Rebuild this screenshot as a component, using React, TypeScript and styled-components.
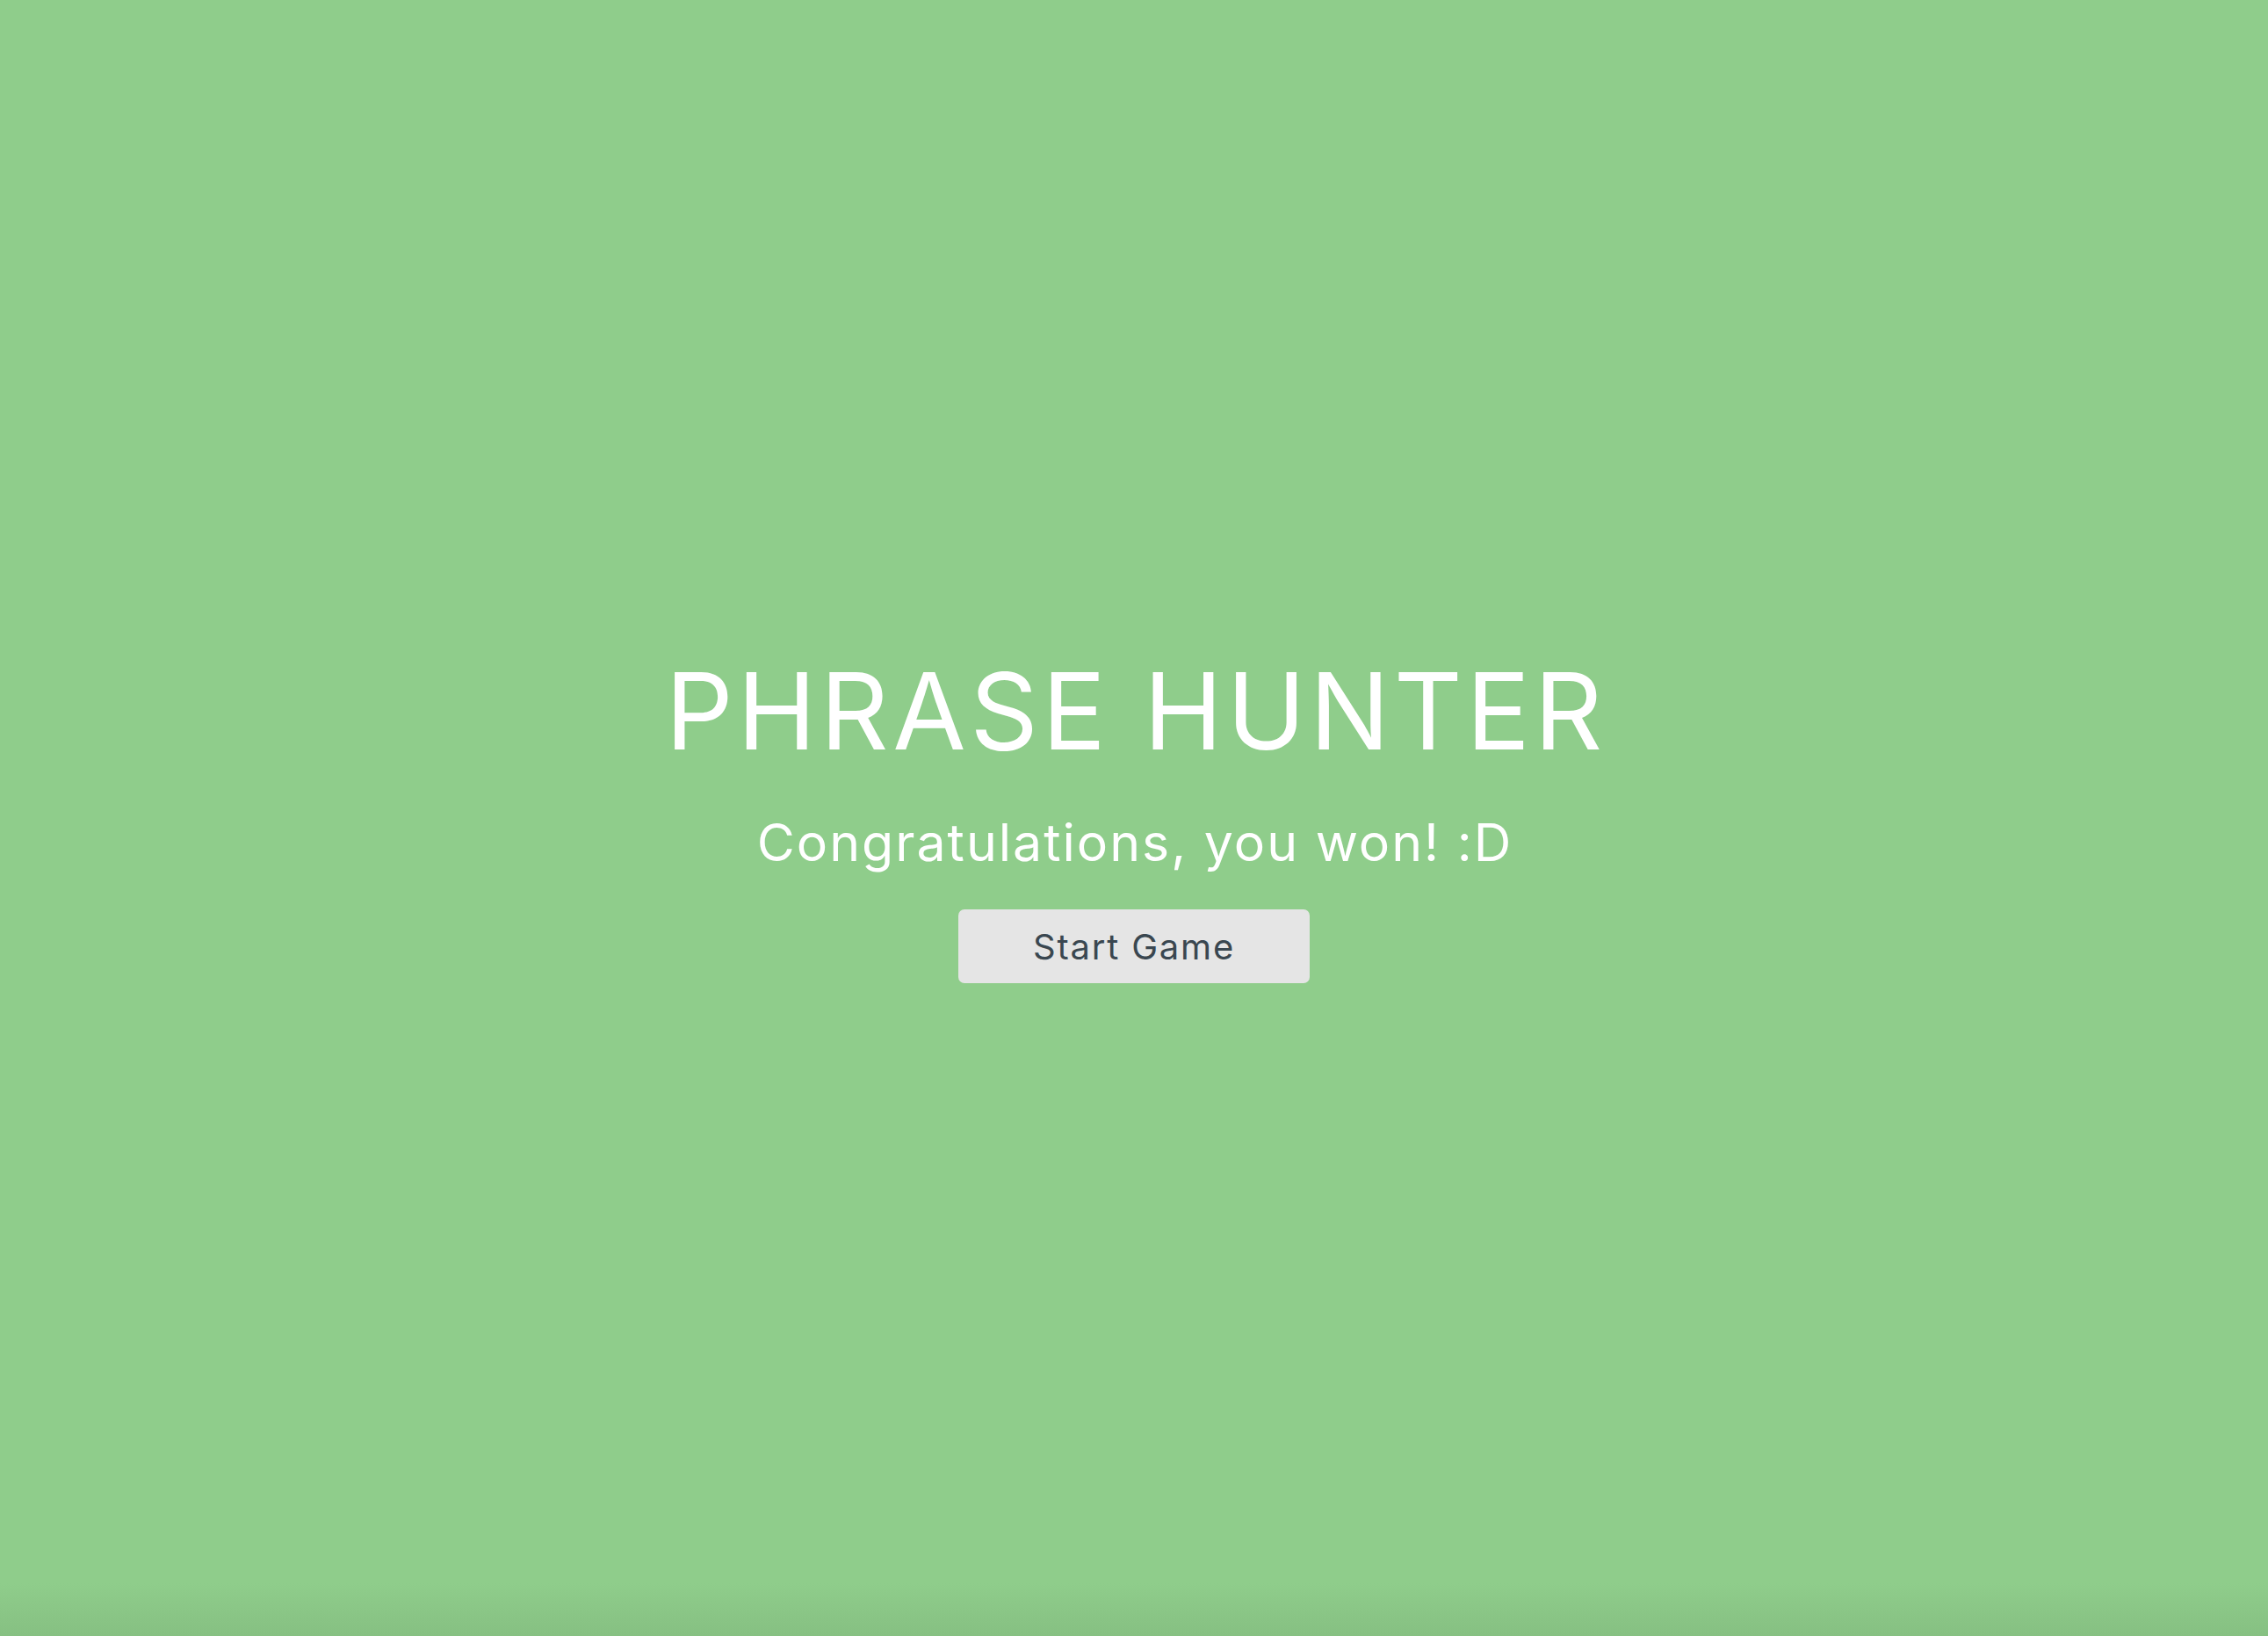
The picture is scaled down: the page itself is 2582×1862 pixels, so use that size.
import React from "react";
import styled, { createGlobalStyle } from "styled-components";

const GlobalStyle = createGlobalStyle`
  html, body {
    margin: 0;
    padding: 0;
    height: 100%;
  }
  body {
    background: #8fcd8b;
    font-family: Inter, "Open Sans", "Liberation Sans", sans-serif;
  }
`;

const Overlay = styled.main`
  box-sizing: border-box;
  width: 100%;
  height: 1862px;
  padding-top: 6px;
  display: flex;
  flex-direction: column;
  align-items: center;
  justify-content: center;
  background: linear-gradient(
    to bottom,
    #8fcd8b 0%,
    #8fcd8b calc(100% - 60px),
    #86c082 100%
  );
`;

const Title = styled.h1`
  margin: 0;
  font-size: 121px;
  font-weight: 400;
  line-height: 1;
  color: #ffffff;
  letter-spacing: 4.5px;
  text-indent: 4.5px;
`;

const Message = styled.h2`
  margin: 59px 0 0;
  font-size: 59px;
  font-weight: 400;
  line-height: 1;
  color: #ffffff;
  letter-spacing: 2px;
  text-indent: 2px;
`;

const StartButton = styled.button`
  margin-top: 47px;
  width: 400px;
  height: 84px;
  border: none;
  border-radius: 7px;
  background: #e5e5e5;
  color: #3a4750;
  font-family: inherit;
  font-size: 40px;
  font-weight: 400;
  letter-spacing: 1.8px;
  cursor: pointer;
`;

export default function App() {
  return (
    <>
      <GlobalStyle />
      <Overlay>
        <Title>PHRASE HUNTER</Title>
        <Message>Congratulations, you won! :D</Message>
        <StartButton>Start Game</StartButton>
      </Overlay>
    </>
  );
}
